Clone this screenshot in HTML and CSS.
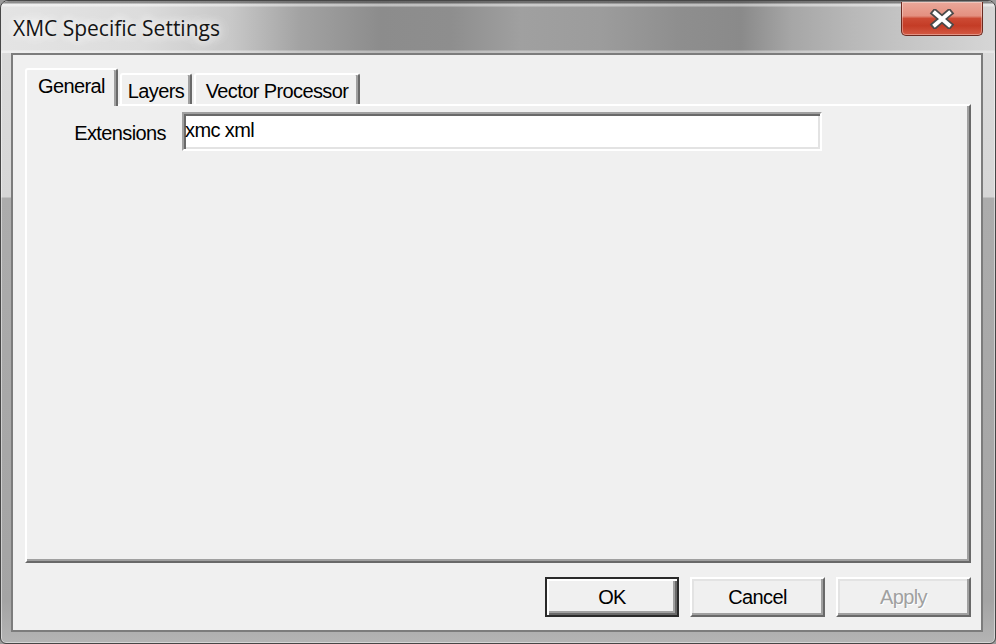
FILE: index.html
```html
<!DOCTYPE html>
<html lang="en">
<head>
<meta charset="utf-8">
<title>XMC Specific Settings</title>
<link rel="stylesheet" href="styles.css">
</head>
<body>
<div class="window">
  <div class="titlebar">
    <span class="title">XMC Specific Settings</span>
    <button class="close" aria-label="Close">
      <svg width="26" height="20" viewBox="0 0 26 20">
        <path d="M6 4 L20 16 M20 4 L6 16" stroke="#4a4a4a" stroke-width="7.5" stroke-linecap="square" fill="none"/>
        <path d="M6 4 L20 16 M20 4 L6 16" stroke="#ffffff" stroke-width="4" stroke-linecap="square" fill="none"/>
      </svg>
    </button>
  </div>
  <div class="client">
    <div class="tabs">
      <div class="tab active tab-general">General</div>
      <div class="tab tab-layers">Layers</div>
      <div class="tab tab-vector">Vector Processor</div>
    </div>
    <div class="panel">
      <div class="field-row">
        <label class="field-label">Extensions</label>
        <div class="textbox">xmc xml</div>
      </div>
    </div>
    <div class="buttons">
      <button class="btn btn-ok default">OK</button>
      <button class="btn btn-cancel">Cancel</button>
      <button class="btn btn-apply disabled">Apply</button>
    </div>
  </div>
</div>
</body>
</html>
```

FILE: styles.css
```css
html, body {
  margin: 0;
  padding: 0;
}
body {
  width: 996px;
  height: 644px;
  overflow: hidden;
  background: #9a9a9a;
  font-family: "Liberation Sans", Arial, sans-serif;
}
.window {
  box-sizing: border-box;
  width: 996px;
  height: 644px;
  border: 1px solid #464646;
  border-radius: 8px 8px 6px 6px;
  background: linear-gradient(to bottom, #dcdcdc 0, #d6d6d6 196px, #acacac 197px, #a4a4a4 600px, #b4b4b4 100%);
  box-shadow: inset 0 0 0 1px rgba(255,255,255,0.45);
  display: flex;
  flex-direction: column;
  overflow: hidden;
}
.titlebar {
  flex: none;
  height: 52px;
  display: flex;
  align-items: flex-start;
  padding-left: 12px;
  border-radius: 7px 7px 0 0;
  background:
    linear-gradient(to bottom, rgba(70,70,70,0.55) 0, rgba(70,70,70,0.55) 2px, rgba(255,255,255,0.45) 3px, rgba(255,255,255,0.45) 5px, rgba(255,255,255,0) 6px, rgba(255,255,255,0) 49px, rgba(255,255,255,0.4) 50px, rgba(255,255,255,0.4) 52px),
    linear-gradient(to right, #e4e4e4 0, #dcdcdc 140px, #c8c8c8 230px, #a2a2a2 300px, #8c8c8c 380px, #8e8e8e 450px, #a0a0a0 520px, #9c9c9c 600px, #8e8e8e 680px, #8a8a8a 740px, #a6a6a6 790px, #b8b8b8 850px, #c4c4c4 900px, #d6d6d6 994px);
}
.title {
  margin-top: 13px;
  font-family: "Open Sans", "Noto Sans", sans-serif;
  font-size: 21px;
  line-height: 28px;
  color: #151515;
  text-shadow: 0 0 8px #ffffff, 0 0 14px rgba(255,255,255,0.9), 0 0 20px rgba(255,255,255,0.7);
}
.close {
  margin-left: auto;
  margin-top: 1px;
  margin-right: 12px;
  width: 82px;
  height: 34px;
  padding: 0;
  border: 1px solid #6b2a20;
  border-top: none;
  border-radius: 0 0 5px 5px;
  background: linear-gradient(to bottom, #eaa89a 0, #e49080 42%, #cc4a34 50%, #c43c26 72%, #d45a44 100%);
  box-shadow: inset 0 0 0 1px rgba(255,255,255,0.35);
  display: flex;
  align-items: center;
  justify-content: center;
}
.close svg {
  display: block;
}
.client {
  flex: 1;
  margin: 0 12px 11px 10px;
  border: 2px solid #7c7c7c;
  background: #f0f0f0;
  display: flex;
  flex-direction: column;
  padding: 13px 10px 0 12px;
  min-height: 0;
}
.tabs {
  flex: none;
  height: 36px;
  display: flex;
  align-items: flex-end;
}
.tab {
  box-sizing: border-box;
  height: 31px;
  margin-left: 2px;
  padding-top: 4px;
  border-top: 2px solid #ffffff;
  border-left: 2px solid #ffffff;
  border-right: 2px solid #696969;
  border-radius: 3px 3px 0 0;
  box-shadow: inset -2px 0 0 #a0a0a0;
  background: #f0f0f0;
  text-align: center;
  font-size: 20px;
  line-height: 24px;
  letter-spacing: -0.6px;
  color: #000;
  white-space: nowrap;
}
.tab.active {
  height: 38px;
  margin-left: 0;
  margin-bottom: -2px;
  position: relative;
  z-index: 1;
}
.tab-general { width: 93px; }
.tab-layers { width: 72px; }
.tab-vector { width: 166px; }
.panel {
  flex: 1;
  border-top: 2px solid #ffffff;
  border-left: 2px solid #ffffff;
  border-right: 2px solid #696969;
  border-bottom: 2px solid #696969;
  box-shadow: inset -2px -2px 0 #a0a0a0;
  background: #f0f0f0;
  padding-top: 6px;
}
.field-row {
  display: flex;
  align-items: flex-start;
}
.field-label {
  width: 139px;
  margin-right: 16px;
  margin-top: 9px;
  text-align: right;
  font-size: 20px;
  line-height: 24px;
  letter-spacing: -0.6px;
  color: #000;
}
.textbox {
  box-sizing: border-box;
  width: 640px;
  height: 39px;
  border: 2px solid;
  border-color: #a0a0a0 #ffffff #ffffff #a0a0a0;
  box-shadow: inset 2px 2px 0 #696969, inset -2px -2px 0 #e3e3e3;
  background: #ffffff;
  padding: 4px 0 0 1px;
  font-size: 20px;
  line-height: 24px;
  letter-spacing: -0.6px;
  color: #000;
}
.buttons {
  flex: none;
  height: 40px;
  margin-top: 14px;
  margin-bottom: 13px;
  display: flex;
  justify-content: flex-end;
  gap: 11px;
}
.btn {
  box-sizing: border-box;
  width: 135px;
  height: 40px;
  margin: 0;
  padding: 0;
  border: 2px solid;
  border-color: #ffffff #696969 #696969 #ffffff;
  box-shadow: inset -2px -2px 0 #a0a0a0, inset 2px 2px 0 #e3e3e3;
  background: #f0f0f0;
  display: flex;
  align-items: center;
  justify-content: center;
  font-family: "Liberation Sans", Arial, sans-serif;
  font-size: 20px;
  line-height: 24px;
  letter-spacing: -0.6px;
  color: #000;
}
.btn-ok {
  width: 134px;
}
.btn.default {
  border-color: #2a2a2a;
  box-shadow: inset 2px 2px 0 #ffffff, inset -2px -2px 0 #696969, inset -4px -4px 0 #a0a0a0;
}
.btn.disabled {
  color: #a0a0a0;
  text-shadow: 1px 1px 0 #ffffff;
}
```
